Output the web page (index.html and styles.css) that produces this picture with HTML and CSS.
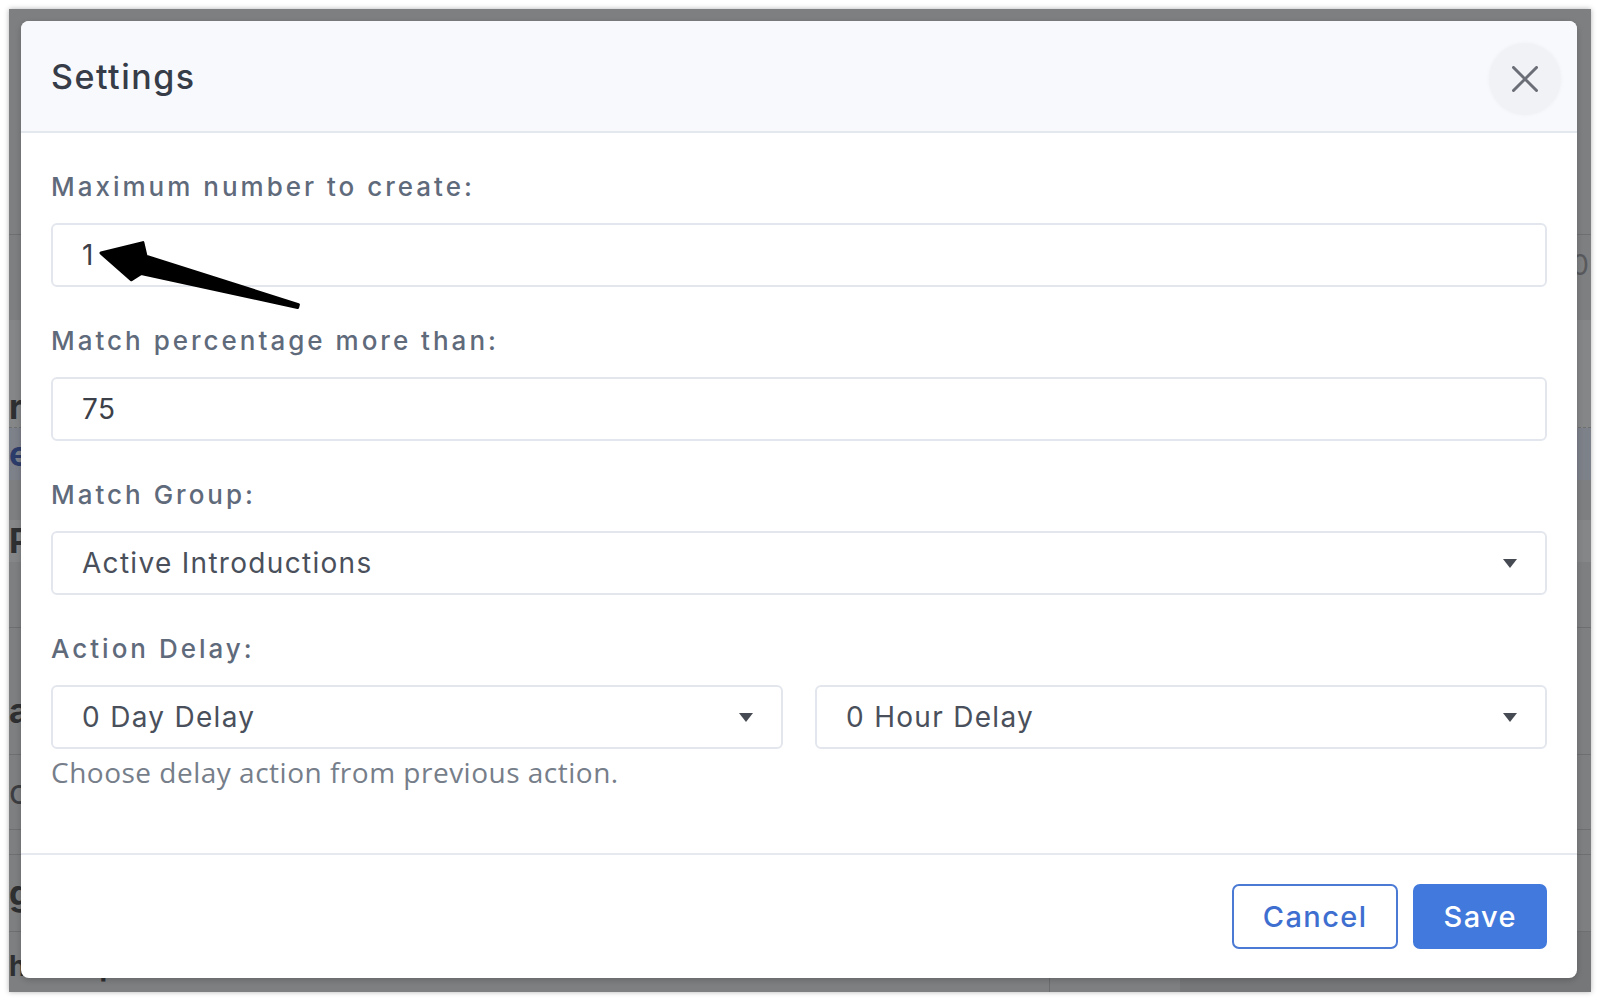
FILE: index.html
```html
<!DOCTYPE html>
<html lang="en">
<head>
  <meta charset="UTF-8">
  <meta name="viewport" content="width=device-width, initial-scale=1">
  <title>Settings</title>
  <link rel="stylesheet" href="styles.css">
</head>
<body>
  <div class="screen">
    <!-- Page content that sits behind the modal backdrop -->
    <div class="behind">
      <div class="bg-row bg-row--top"></div>
      <div class="bg-row bg-row--stats"><span class="bg-num">30</span></div>
      <div class="bg-row bg-row--light bg-row--dashed"><span class="bg-text">r</span></div>
      <div class="bg-row bg-row--blue"><span class="bg-link">ec</span></div>
      <div class="bg-row bg-row--gap"></div>
      <div class="bg-row bg-row--light bg-row--p"><span class="bg-text">P</span></div>
      <div class="bg-row bg-row--plain"></div>
      <div class="bg-row bg-row--a"><span class="bg-text">a</span></div>
      <div class="bg-row bg-row--o"><span class="bg-text bg-text--soft">o</span></div>
      <div class="bg-row bg-row--thin"></div>
      <div class="bg-row bg-row--g"><span class="bg-text">g</span></div>
      <div class="bg-row bg-row--last">
        <div class="bg-cell bg-cell--main"><span class="bg-text">h Group:</span> <span class="bg-text bg-text--soft">Active Introductions</span></div>
        <div class="bg-cell bg-cell--mid"></div>
        <div class="bg-cell bg-cell--side"></div>
      </div>
    </div>

    <!-- Settings modal -->
    <div class="modal">
      <div class="modal-header">
        <h2 class="modal-title">Settings</h2>
        <button type="button" class="btn-close" aria-label="Close">
          <svg width="26" height="26" viewBox="0 0 26 26">
            <path d="M1.5 1.5 L24.5 24.5 M24.5 1.5 L1.5 24.5" stroke="#6b6e76" stroke-width="3" stroke-linecap="round" fill="none"/>
          </svg>
        </button>
      </div>

      <div class="modal-body">
        <div class="form-group">
          <label for="maxCreate">Maximum number to create:</label>
          <input type="text" id="maxCreate" class="form-control" value="1">
        </div>
        <div class="form-group">
          <label for="matchPercent">Match percentage more than:</label>
          <input type="text" id="matchPercent" class="form-control" value="75">
        </div>
        <div class="form-group">
          <label>Match Group:</label>
          <div class="form-select"><span class="select-value">Active Introductions</span><span class="caret"></span></div>
        </div>
        <div class="form-group form-group--last">
          <label>Action Delay:</label>
          <div class="delay-row">
            <div class="form-select"><span class="select-value">0 Day Delay</span><span class="caret"></span></div>
            <div class="form-select"><span class="select-value">0 Hour Delay</span><span class="caret"></span></div>
          </div>
          <p class="help-text">Choose delay action from previous action.</p>
        </div>
      </div>

      <div class="modal-footer">
        <button type="button" class="btn btn-outline">Cancel</button>
        <button type="button" class="btn btn-primary">Save</button>
      </div>

      <!-- Annotation arrow pointing at the first value -->
      <svg class="annotation-arrow" width="210" height="80" viewBox="95 233 210 80">
        <path d="M101 253 L142.9 242.6 L146 256.2 L298.4 304.6 L297.6 307.5 L141.2 273.6 L131.4 279.8 Z" fill="#000" stroke="#000" stroke-width="3" stroke-linejoin="round"/>
      </svg>
    </div>
  </div>
</body>
</html>
```

FILE: styles.css
```css
/* Base page */
* {
  box-sizing: border-box;
}
body {
  margin: 0;
  background: #fff;
  font-family: Inter, "Noto Sans", sans-serif;
}

/* Dimmed window behind the modal */
.screen {
  position: relative;
  margin: 9px;
  width: 1582px;
  height: 983px;
  background: #7e7f81;
  overflow: hidden;
  box-shadow: 0 0 5px rgba(0, 0, 0, 0.3);
}

/* Background page rows (only the edges show) */
.behind {
  display: flex;
  flex-direction: column;
  height: 100%;
  font-size: 34px;
  line-height: 40px;
}
.bg-row {
  display: flex;
  align-items: center;
  flex: none;
  border-bottom: 1px solid #6e6f71;
  white-space: nowrap;
}
.bg-row--top { height: 226px; }
.bg-row--stats { height: 85px; align-items: flex-start; border-bottom: 0; }
.bg-row--light { background: #858688; }
.bg-row--dashed { height: 108px; align-items: flex-end; border-bottom: 1px dashed #6e6f71; }
.bg-row--blue { height: 52px; background: #7d8189; border-bottom: 0; }
.bg-row--gap { height: 40px; border-bottom: 0; }
.bg-row--p { height: 42px; border-bottom: 0; }
.bg-row--plain { height: 66px; }
.bg-row--a { height: 127px; padding-top: 40px; }
.bg-row--o { height: 75px; }
.bg-row--thin { height: 25px; }
.bg-row--g { height: 77px; }
.bg-row--last { flex: 1; align-items: stretch; border-bottom: 0; }
.bg-text {
  font-weight: 700;
  color: #2e2f31;
}
.bg-text--soft {
  font-weight: 400;
  color: #3c3d40;
}
.bg-link {
  font-weight: 700;
  color: #2c3c6a;
}
.bg-num {
  margin-left: auto;
  margin-right: 2px;
  margin-top: 10px;
  font-size: 28px;
  color: #58595c;
}
.bg-cell--main {
  width: 1041px;
  padding-top: 14px;
  border-right: 1px solid #6c6d6f;
  font-size: 28px;
}
.bg-cell--mid { width: 130px; }
.bg-cell--side { flex: 1; background: #767779; }

/* Modal box */
.modal {
  position: absolute;
  top: 12px;
  left: 12px;
  width: 1556px;
  height: 957px;
  display: flex;
  flex-direction: column;
  background: #fff;
  border-radius: 8px;
  overflow: hidden;
  box-shadow: 0 2px 6px rgba(0, 0, 0, 0.2);
}
.modal-header {
  flex: none;
  height: 112px;
  display: flex;
  align-items: center;
  justify-content: space-between;
  padding: 0 16px 0 30px;
  background: #f8f9fc;
  border-bottom: 2px solid #e3e7ee;
}
.modal-title {
  margin: 0;
  font-size: 34px;
  line-height: 41px;
  font-weight: 500;
  letter-spacing: 1.5px;
  color: #363c48;
}
.btn-close {
  width: 72px;
  height: 72px;
  margin-top: 6px;
  padding: 0;
  display: flex;
  align-items: center;
  justify-content: center;
  border: 0;
  border-radius: 50%;
  background: #f1f2f5;
  box-shadow: 0 0 4px rgba(0, 0, 0, 0.04);
}

/* Form area */
.modal-body {
  flex: 1;
  padding: 36px 30px 0;
}
.form-group {
  margin-bottom: 36px;
}
.form-group--last {
  margin-bottom: 0;
}
label {
  display: block;
  margin-bottom: 18px;
  font-size: 26px;
  line-height: 36px;
  font-weight: 500;
  letter-spacing: 3px;
  color: #5f6a7b;
}
.form-control,
.form-select {
  display: flex;
  align-items: center;
  width: 100%;
  height: 64px;
  padding: 0 28px 0 29px;
  border: 2px solid #e3e7ed;
  border-radius: 6px;
  background: #fff;
  font-family: inherit;
  font-size: 28px;
  color: #3b4049;
}
.form-control {
  outline: none;
  letter-spacing: 0.5px;
}
.form-select {
  justify-content: space-between;
  color: #4a505b;
}
.select-value {
  letter-spacing: 1.3px;
}
.caret {
  width: 0;
  height: 0;
  border-left: 7.5px solid transparent;
  border-right: 7.5px solid transparent;
  border-top: 9px solid #464b53;
}
.delay-row {
  display: grid;
  grid-template-columns: 1fr 1fr;
  gap: 32px;
}
.help-text {
  margin: 4px 0 0;
  font-family: "Open Sans", sans-serif;
  font-size: 28px;
  line-height: 38px;
  letter-spacing: 0.5px;
  color: #767e8a;
}

/* Footer buttons */
.modal-footer {
  flex: none;
  height: 125px;
  display: flex;
  justify-content: flex-end;
  align-items: flex-start;
  gap: 15px;
  padding: 29px 30px 0;
  border-top: 2px solid #e6e9ef;
}
.btn {
  height: 65px;
  padding: 0 28px 0 29px;
  border-radius: 7px;
  font-family: inherit;
  font-size: 29px;
  font-weight: 500;
  letter-spacing: 1.4px;
}
.btn-outline {
  background: #fff;
  border: 2px solid #4a7ad4;
  color: #3e6fd0;
}
.btn-primary {
  background: #4179dc;
  border: 2px solid #4179dc;
  color: #fff;
}

/* Arrow drawn over the first input */
.annotation-arrow {
  position: absolute;
  left: 74px;
  top: 212px;
}
```
